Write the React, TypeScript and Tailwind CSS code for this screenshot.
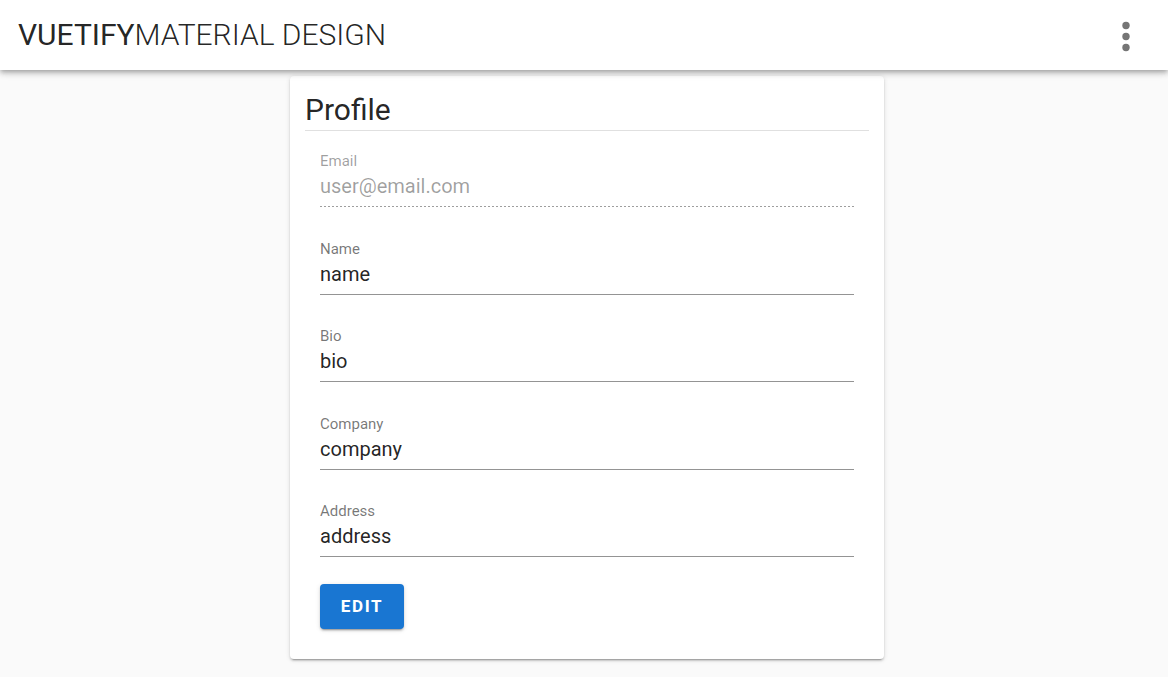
import React from "react";

const fields = [
  { label: "Email", value: "user@email.com", disabled: true },
  { label: "Name", value: "name" },
  { label: "Bio", value: "bio" },
  { label: "Company", value: "company" },
  { label: "Address", value: "address" },
];

function Field({ label, value, disabled }: { label: string; value: string; disabled?: boolean }) {
  return (
    <div className="flex flex-col">
      <div className={`text-[15px] leading-[18px] ${disabled ? "text-black/[.38]" : "text-black/[.54]"}`}>{label}</div>
      <div className={`mt-[3px] text-[20px] leading-[26px] ${disabled ? "text-black/[.38]" : "text-black/[.87]"}`}>{value}</div>
      {disabled ? (
        <div className="mt-[7px] h-px bg-[linear-gradient(to_right,rgba(0,0,0,0.38)_0,rgba(0,0,0,0.38)_2px,transparent_2px)] bg-[length:4px_1px] bg-repeat-x" />
      ) : (
        <div className="mt-[7px] h-px bg-black/[.42]" />
      )}
    </div>
  );
}

export default function App() {
  return (
    <div className="min-h-[677px] bg-[#fafafa] font-['Roboto',sans-serif]">
      <header className="relative z-10 flex h-[70px] items-center justify-between bg-white pl-[18px] pr-[36px] shadow-[0_2px_4px_-1px_rgba(0,0,0,0.2),0_4px_5px_0_rgba(0,0,0,0.14),0_1px_10px_0_rgba(0,0,0,0.12)]">
        <div className="text-[30px] leading-[36px] text-black/[.87]">
          <span className="font-normal">VUETIFY</span>
          <span className="font-light">MATERIAL DESIGN</span>
        </div>
        <svg width="12" height="32" viewBox="0 0 12 32" className="mt-[3px]">
          <circle cx="6" cy="4.5" r="3.7" fill="#757575" />
          <circle cx="6" cy="15.5" r="3.7" fill="#757575" />
          <circle cx="6" cy="26.5" r="3.7" fill="#757575" />
        </svg>
      </header>

      <main className="pl-[290px] pt-[6px] pb-[18px]">
        <div className="w-[594px] rounded-[4px] bg-white px-[15px] pt-[16px] pb-[30px] shadow-[0_3px_1px_-2px_rgba(0,0,0,0.2),0_2px_2px_0_rgba(0,0,0,0.14),0_1px_5px_0_rgba(0,0,0,0.12)]">
          <h1 className="text-[30px] leading-[36px] font-normal text-black/[.87]">Profile</h1>
          <div className="mt-[2px] h-px bg-black/[.12]" />
          <div className="flex flex-col gap-[32.5px] px-[15px] pt-[21px]">
            {fields.map((f) => (
              <Field key={f.label} {...f} />
            ))}
          </div>
          <div className="px-[15px] pt-[27px]">
            <button className="flex h-[45px] w-[84px] items-center justify-center rounded-[4px] bg-[#1976d2] text-[17px] font-bold tracking-[0.1em] text-white shadow-[0_3px_1px_-2px_rgba(0,0,0,0.2),0_2px_2px_0_rgba(0,0,0,0.14),0_1px_5px_0_rgba(0,0,0,0.12)]">
              EDIT
            </button>
          </div>
        </div>
      </main>
    </div>
  );
}
